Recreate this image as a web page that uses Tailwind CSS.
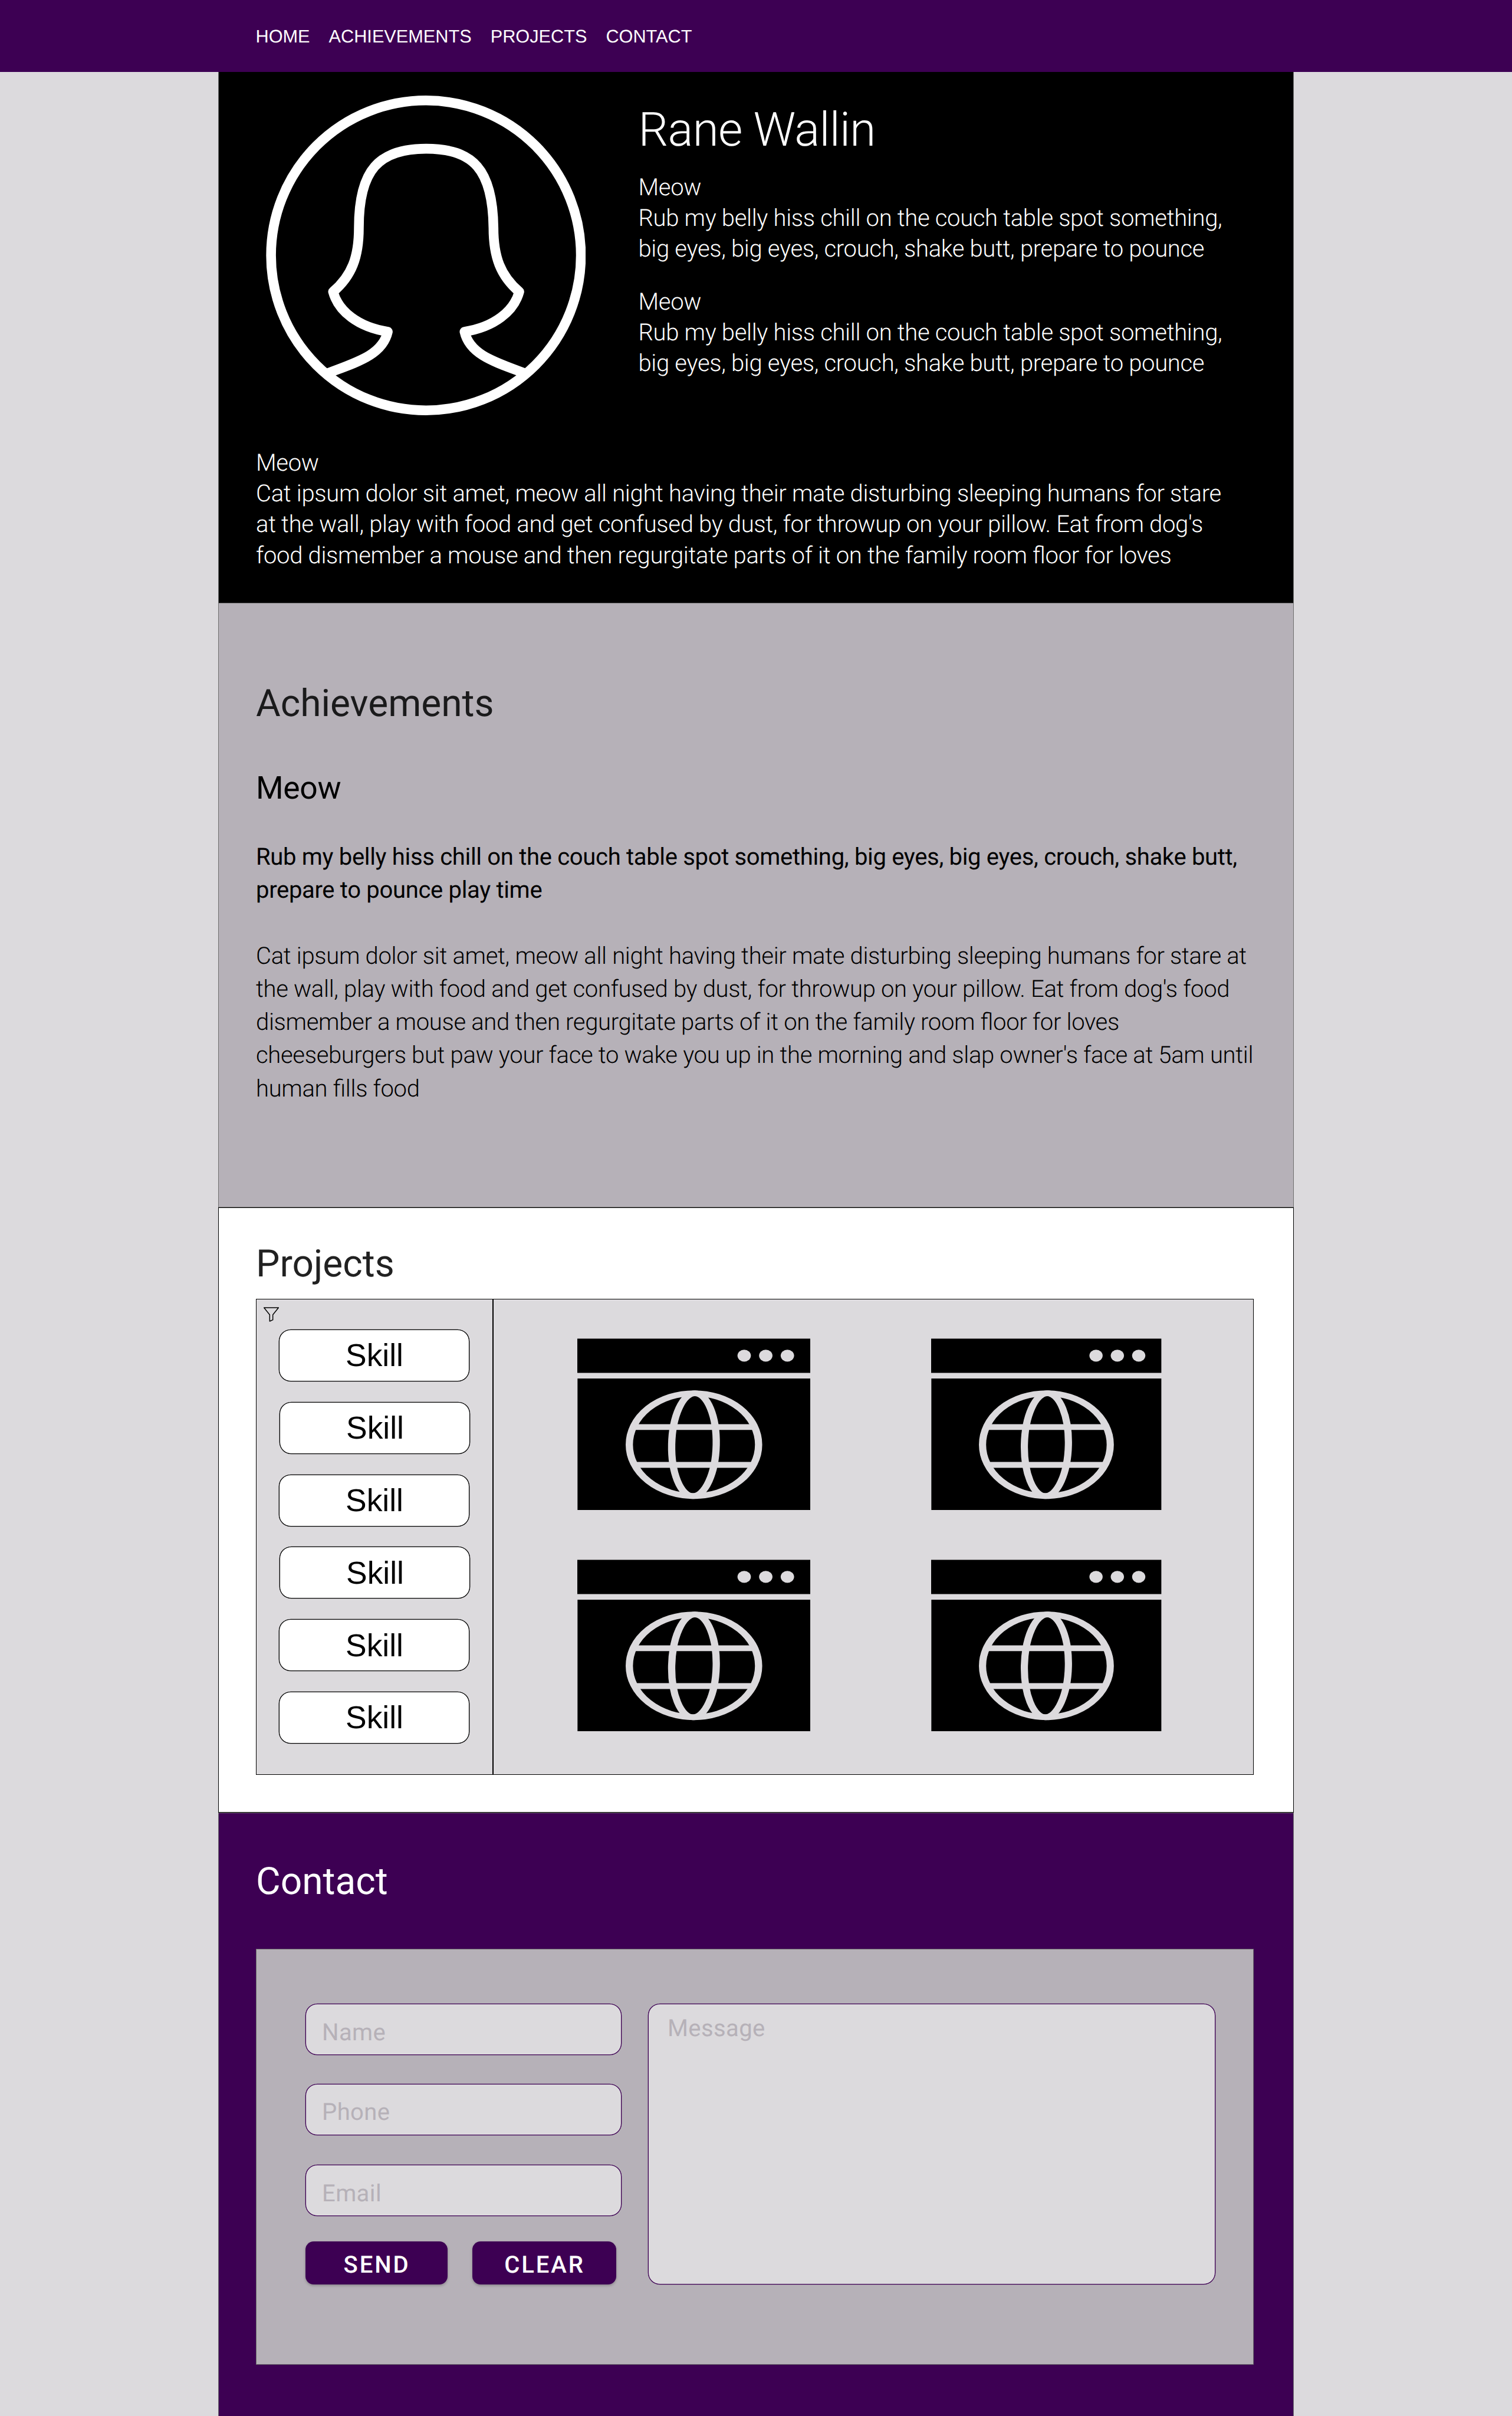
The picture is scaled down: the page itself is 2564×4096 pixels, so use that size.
<!DOCTYPE html>
<html lang="en">
<head>
<meta charset="utf-8">
<title>Rane Wallin</title>
<script src="https://cdn.jsdelivr.net/npm/@tailwindcss/browser@4"></script>
</head>
<body class="w-[2564px] h-[4096px] overflow-hidden bg-[#dcdadd] font-['Roboto',sans-serif] text-black [text-rendering:geometricPrecision]">
<svg class="hidden">
  <symbol id="window" viewBox="0 0 592 436" preserveAspectRatio="none">
    <rect x="0" y="0.7" width="592" height="87" fill="#000"/>
    <rect x="0.5" y="102" width="591.5" height="334" fill="#000"/>
    <g fill="#dcdadd"><ellipse cx="423.8" cy="44" rx="17" ry="15"/><ellipse cx="478.6" cy="44" rx="17" ry="15"/><ellipse cx="533.5" cy="44" rx="17" ry="15"/></g>
    <g transform="translate(296.2 270) scale(1.257 1)" fill="none" stroke="#dcdadd" stroke-width="14.7">
      <circle r="130.6"/>
      <ellipse rx="45" ry="130.6" transform="rotate(1)"/>
      <path d="M-118 -44.8H118M-118 51.4H118"/>
    </g>
  </symbol>
</svg>

<header class="h-[122px] bg-[#3d0053]">
  <nav class="flex h-full items-center pl-[433.5px] pt-[1.5px] gap-8 font-['Liberation_Sans',Arial,sans-serif] text-[30.7px] text-white whitespace-nowrap">
    <a>HOME</a><a>ACHIEVEMENTS</a><a>PROJECTS</a><a>CONTACT</a>
  </nav>
</header>

<main class="ml-[370px] w-[1824px] whitespace-nowrap [font-feature-settings:'liga'_1]">
  <section class="h-[900px] bg-black text-white font-light border-x border-[#707070]">
    <div class="flex h-[637px] pl-[80px]">
      <svg class="mt-[40px] size-[542px] shrink-0" viewBox="0 0 812 812" fill="none" stroke="#fff" stroke-width="24.8" stroke-linejoin="round">
        <circle cx="406.5" cy="406" r="393.6"/>
        <path d="M152 707C228 678 296 660 309.5 599.9C234 588 184 548 170.5 498.3C218 458 236 410 236 335.8C236 188 287 135 407 135C527 135 576 188 578 335.8C578 410 596 458 643.5 498.3C630 548 580 588 504.5 599.9C518 660 586 678 662 707"/>
      </svg>
      <div class="ml-[89.5px] pt-[51px]">
        <h1 class="text-[80px] leading-[94px] tracking-[-0.7px]">Rane Wallin</h1>
        <p class="mt-[25px] text-[40px] leading-[52.2px] tracking-[-0.32px]">Meow<br>Rub my belly hiss chill on the couch table spot something,<br>big eyes, big eyes, crouch, shake butt, prepare to pounce</p>
        <p class="mt-[37px] text-[40px] leading-[52.2px] tracking-[-0.32px]">Meow<br>Rub my belly hiss chill on the couch table spot something,<br>big eyes, big eyes, crouch, shake butt, prepare to pounce</p>
      </div>
    </div>
    <p class="pl-[63px] text-[40px] leading-[52.2px] tracking-[-0.32px]">Meow<br>Cat ipsum dolor sit amet, meow all night having their mate disturbing sleeping humans for stare<br>at the wall, play with food and get confused by dust, for throwup on your pillow. Eat from dog's<br>food dismember a mouse and then regurgitate parts of it on the family room floor for loves</p>
  </section>

  <section class="h-[1025px] bg-[#b6b1b8] border border-[#707070] pl-[63px] pt-[131.5px]">
    <h2 class="text-[64px] leading-[75px] text-[#1a1a1b]">Achievements</h2>
    <h3 class="mt-[75px] text-[53.4px] leading-[63px] tracking-[-0.3px]">Meow</h3>
    <p class="mt-[57.5px] text-[40px] leading-[56.1px] tracking-[-0.32px]">Rub my belly hiss chill on the couch table spot something, big eyes, big eyes, crouch, shake butt,<br>prepare to pounce play time</p>
    <p class="mt-[56px] text-[40px] leading-[56.1px] font-light tracking-[-0.32px]">Cat ipsum dolor sit amet, meow all night having their mate disturbing sleeping humans for stare at<br>the wall, play with food and get confused by dust, for throwup on your pillow. Eat from dog's food<br>dismember a mouse and then regurgitate parts of it on the family room floor for loves<br>cheeseburgers but paw your face to wake you up in the morning and slap owner's face at 5am until<br>human fills food</p>
  </section>

  <section class="h-[1026px] bg-white border border-black pl-[63px] pt-[57px]">
    <h2 class="text-[64px] leading-[75px] text-[#212121]">Projects</h2>
    <div class="mt-[22px] flex h-[807px] w-[1692px] border border-black bg-[#dcdadd]">
      <aside class="w-[402px] shrink-0 border-r-2 border-black pl-[38px]">
        <svg class="-ml-[26px] mt-[13px] h-[25px] w-[26px]" viewBox="0 0 39 37.5" fill="none" stroke="#000" stroke-width="2.2" stroke-linejoin="round"><path d="M1 1.5H38L23.5 19.5V32.5L15.5 36V19.5Z"/></svg>
        <div class="mt-[13px] flex flex-col gap-[34.8px] font-['Liberation_Sans',Arial,sans-serif] text-[53.4px]">
          <button class="h-[88px] w-[323px] rounded-[20px] border border-black bg-white pt-px pl-px shadow-[0_0_0_0.33px_#000]">Skill</button>
          <button class="ml-px h-[88px] w-[323px] rounded-[20px] border border-black bg-white pt-px pl-px shadow-[0_0_0_0.33px_#000]">Skill</button>
          <button class="h-[88px] w-[323px] rounded-[20px] border border-black bg-white pt-px pl-px shadow-[0_0_0_0.33px_#000]">Skill</button>
          <button class="ml-px h-[88px] w-[323px] rounded-[20px] border border-black bg-white pt-px pl-px shadow-[0_0_0_0.33px_#000]">Skill</button>
          <button class="h-[88px] w-[323px] rounded-[20px] border border-black bg-white pt-px pl-px shadow-[0_0_0_0.33px_#000]">Skill</button>
          <button class="h-[88px] w-[323px] rounded-[20px] border border-black bg-white pt-px pl-px shadow-[0_0_0_0.33px_#000]">Skill</button>
        </div>
      </aside>
      <div class="grid grid-cols-[395.3px_390.6px] content-start gap-x-[205px] gap-y-[84.2px] pl-[142px] pt-[66px]">
        <svg class="h-[291px] w-full"><use href="#window"/></svg>
        <svg class="h-[291px] w-full"><use href="#window"/></svg>
        <svg class="h-[291px] w-full"><use href="#window"/></svg>
        <svg class="h-[291px] w-full"><use href="#window"/></svg>
      </div>
    </div>
  </section>

  <section class="h-[1030px] bg-[#3d0053] border border-[#707070] pl-[63px] pt-[78px]">
    <h2 class="text-[64px] leading-[75px] text-white">Contact</h2>
    <form class="mt-[77px] flex h-[705px] w-[1692px] gap-[45px] border border-[#707070] bg-[#b6b1b8] pl-[83px] pt-[92px] text-[40px] leading-[47px] tracking-[0.4px] text-[#b6b1b8]">
      <div class="w-[536px] shrink-0">
        <div class="h-[87px] rounded-[20px] border border-[#3d0053] bg-[#dcdadd] pl-[27px] pt-[24px] shadow-[0_0_0_0.33px_#3d0053]">Name</div>
        <div class="mt-[49px] h-[87px] rounded-[20px] border border-[#3d0053] bg-[#dcdadd] pl-[27px] pt-[23px] shadow-[0_0_0_0.33px_#3d0053]">Phone</div>
        <div class="mt-[50px] h-[87px] rounded-[20px] border border-[#3d0053] bg-[#dcdadd] pl-[27px] pt-[24px] shadow-[0_0_0_0.33px_#3d0053]">Email</div>
        <div class="mt-[43px] flex gap-[42px] font-medium tracking-[2.9px] text-white">
          <div class="h-[73px] w-[241px] rounded-[14px] bg-[#3d0053] pl-px pt-[16px] text-center shadow-[0_2px_4px_rgba(0,0,0,0.25)]">SEND</div>
          <div class="h-[73px] w-[244px] rounded-[14px] bg-[#3d0053] pl-px pt-[16px] text-center shadow-[0_2px_4px_rgba(0,0,0,0.25)]">CLEAR</div>
        </div>
      </div>
      <div class="h-[476px] w-[962px] rounded-[20px] border border-[#3d0053] bg-[#dcdadd] pl-[32px] pt-[17px] shadow-[0_0_0_0.33px_#3d0053]">Message</div>
    </form>
  </section>
</main>
</body>
</html>
